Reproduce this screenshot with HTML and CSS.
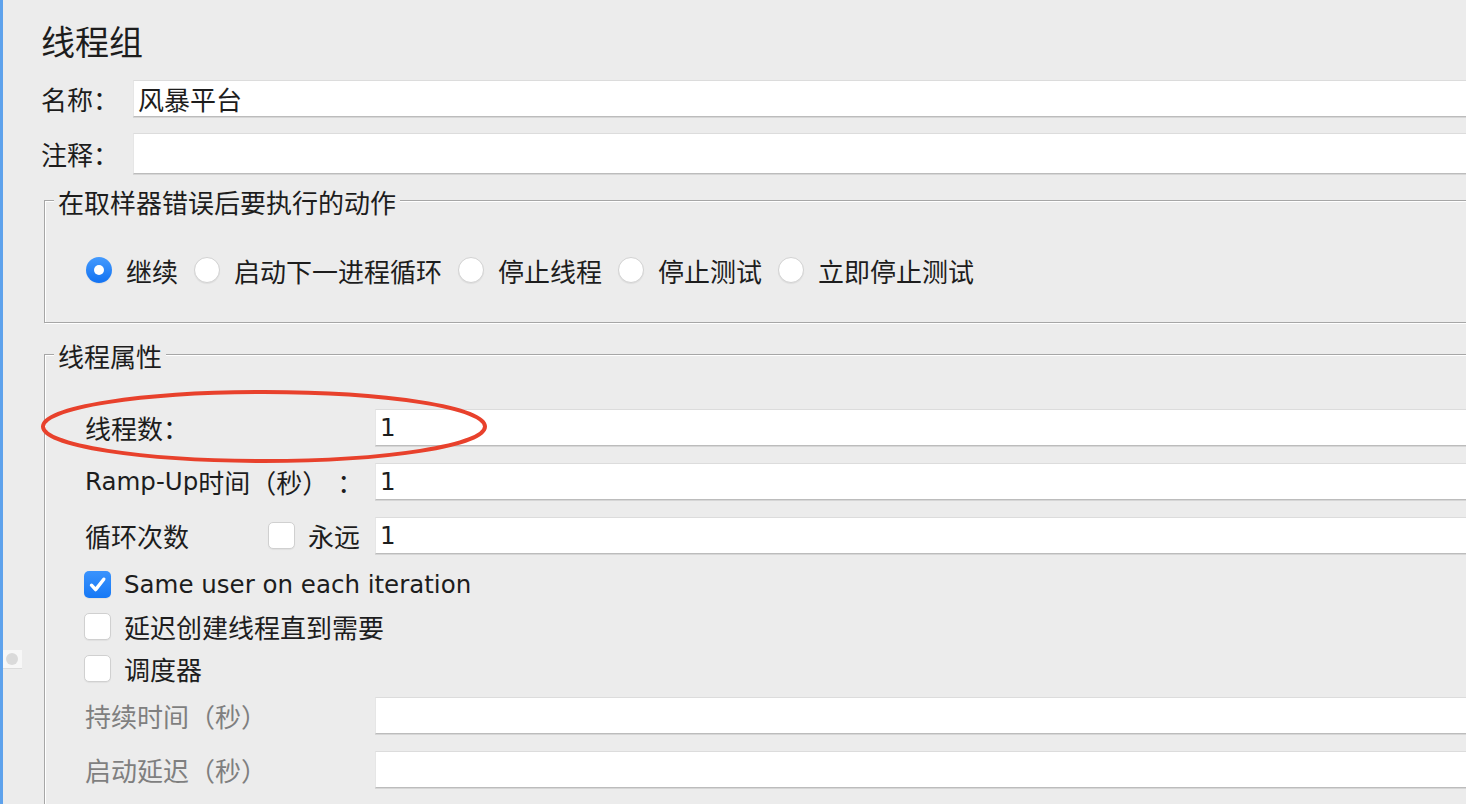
FILE: index.html
```html
<!DOCTYPE html>
<html lang="zh-CN">
<head>
<meta charset="utf-8">
<title>线程组</title>
<link rel="stylesheet" href="styles.css">
</head>
<body>
<div class="window">
  <div class="split-handle"><span class="split-dot"></span></div>
  <main class="panel">
    <h1 class="title">线程组</h1>
    <div class="form-row name-row">
      <span class="row-label">名称：</span>
      <div class="input">风暴平台</div>
    </div>
    <div class="form-row comment-row">
      <span class="row-label">注释：</span>
      <div class="input input-tall"></div>
    </div>

    <fieldset class="group group-error">
      <legend>在取样器错误后要执行的动作</legend>
      <div class="radio-group">
        <span class="option"><span class="radio on"></span>继续</span>
        <span class="option"><span class="radio"></span>启动下一进程循环</span>
        <span class="option"><span class="radio"></span>停止线程</span>
        <span class="option"><span class="radio"></span>停止测试</span>
        <span class="option"><span class="radio"></span>立即停止测试</span>
      </div>
    </fieldset>

    <fieldset class="group group-props">
      <legend>线程属性</legend>
      <div class="props-body">
        <div class="prop-fields">
          <div class="prop-row">
            <span class="prop-label">线程数：</span>
            <div class="input"><span class="latin">1</span></div>
          </div>
          <div class="prop-row">
            <span class="prop-label"><span class="latin">Ramp-Up</span>时间（秒）<span class="wide-colon">：</span></span>
            <div class="input"><span class="latin">1</span></div>
          </div>
          <div class="prop-row">
            <span class="prop-label loop-label">
              <span class="loop-text">循环次数</span>
              <span class="checkbox"></span>
              <span class="forever">永远</span>
            </span>
            <div class="input"><span class="latin">1</span></div>
          </div>
        </div>

        <div class="prop-checks">
          <div class="check-row">
            <span class="checkbox on">
              <svg viewBox="0 0 27 27" width="27" height="27"><path d="M7.5 14.2 L11.6 18.6 L19.8 8.2" fill="none" stroke="#fff" stroke-width="3.4" stroke-linecap="round" stroke-linejoin="round"/></svg>
            </span>
            <span class="latin">Same user on each iteration</span>
          </div>
          <div class="check-row">
            <span class="checkbox"></span>
            <span>延迟创建线程直到需要</span>
          </div>
          <div class="check-row">
            <span class="checkbox"></span>
            <span>调度器</span>
          </div>
        </div>

        <div class="prop-fields">
          <div class="prop-row disabled">
            <span class="prop-label">持续时间（秒）</span>
            <div class="input"></div>
          </div>
          <div class="prop-row disabled">
            <span class="prop-label">启动延迟（秒）</span>
            <div class="input"></div>
          </div>
        </div>
      </div>
    </fieldset>
  </main>
  <svg class="annotation" width="452" height="78" viewBox="0 0 452 78">
    <ellipse cx="225" cy="38.5" rx="221" ry="34.5" fill="none" stroke="#e8412c" stroke-width="4"/>
  </svg>
</div>
</body>
</html>
```

FILE: styles.css
```css
body {
  margin: 0;
  background: #ececec;
  font-family: "Noto Sans CJK SC", sans-serif;
  font-size: 26px;
  color: #1d1d1d;
  overflow: hidden;
}

.window {
  position: relative;
  height: 804px;
  box-sizing: border-box;
  border-left: 3px solid #5ea2ec;
  overflow: hidden;
}

.split-handle {
  position: absolute;
  left: -1px;
  top: 650px;
  width: 20px;
  height: 18px;
  background: #f7f7f7;
  border-bottom: 1px solid #dcdcdc;
  display: flex;
  align-items: center;
  justify-content: center;
}

.split-dot {
  width: 12px;
  height: 12px;
  border-radius: 50%;
  background: #dadada;
}

.panel {
  padding: 21px 0 0 38px;
  margin-right: -40px;
}

.title {
  margin: 0;
  font-size: 34px;
  font-weight: 400;
  line-height: 40px;
}

.latin {
  font-family: "DejaVu Sans", "Noto Sans CJK SC", sans-serif;
  font-size: 24.5px;
}

.form-row {
  display: flex;
  align-items: center;
}

.name-row { margin-top: 19px; }
.comment-row { margin-top: 16px; }

.row-label {
  width: 92px;
  flex: none;
}

.input {
  flex: 1;
  height: 37px;
  box-sizing: border-box;
  background: #fff;
  border-top: 1px solid #dcdcdc;
  border-left: 1px solid #e6e6e6;
  border-bottom: 1px solid #bcbcbc;
  box-shadow: 0 1px 0 #d6d6d6;
  display: flex;
  align-items: center;
  padding-left: 4px;
}

.input-tall { height: 41px; }

.group {
  margin: 0 0 0 3px;
  border: 1px solid #a6a6a6;
  box-shadow: inset 1px 1px 0 #fff, 1px 1px 0 #fff;
  min-width: 0;
}

.group legend {
  margin-left: 9px;
  padding: 3px 4px 0;
  line-height: 30px;
  background: #ececec;
}

.group-error {
  margin-top: 10px;
  padding: 38px 0 37px 0;
}

.group-props {
  margin-top: 15px;
  padding: 38px 0 80px 0;
}

.props-body {
  padding-left: 40px;
}

.radio-group {
  display: flex;
  align-items: center;
  height: 30px;
  padding-left: 41px;
}

.option {
  display: flex;
  align-items: center;
  margin-right: 16px;
}

.radio {
  width: 26px;
  height: 26px;
  box-sizing: border-box;
  border-radius: 50%;
  margin-right: 14px;
  background: #fff;
  border: 1px solid #d2d2d2;
  box-shadow: 0 1px 1px rgba(0, 0, 0, 0.06);
}

.radio.on {
  border: none;
  background: linear-gradient(#449afd, #1272f2);
  display: flex;
  align-items: center;
  justify-content: center;
}

.radio.on::after {
  content: "";
  width: 10px;
  height: 10px;
  border-radius: 50%;
  background: #fff;
}

.prop-fields {
  display: flex;
  flex-direction: column;
  gap: 17px;
}

.prop-row {
  display: flex;
  align-items: center;
}

.prop-label {
  width: 290px;
  flex: none;
  display: flex;
  align-items: center;
}

.wide-colon {
  margin-left: 9px;
}

.loop-text { flex: 1; }

.forever {
  margin-left: 13px;
  margin-right: 15px;
}

.checkbox {
  width: 27px;
  height: 27px;
  flex: none;
  box-sizing: border-box;
  border-radius: 5px;
  background: #fff;
  border: 1px solid #d0d0d0;
  box-shadow: 0 1px 1px rgba(0, 0, 0, 0.05);
}

.checkbox.on {
  border: none;
  background: linear-gradient(#3a93fd, #1678f5);
  display: flex;
}

.prop-checks {
  display: flex;
  flex-direction: column;
  gap: 12px;
  margin: 15px 0 14px -1px;
}

.check-row {
  display: flex;
  align-items: center;
  height: 30px;
  gap: 13px;
}

.disabled .prop-label {
  color: #7f7f7f;
}

.annotation {
  position: absolute;
  left: 36px;
  top: 388px;
}
```
